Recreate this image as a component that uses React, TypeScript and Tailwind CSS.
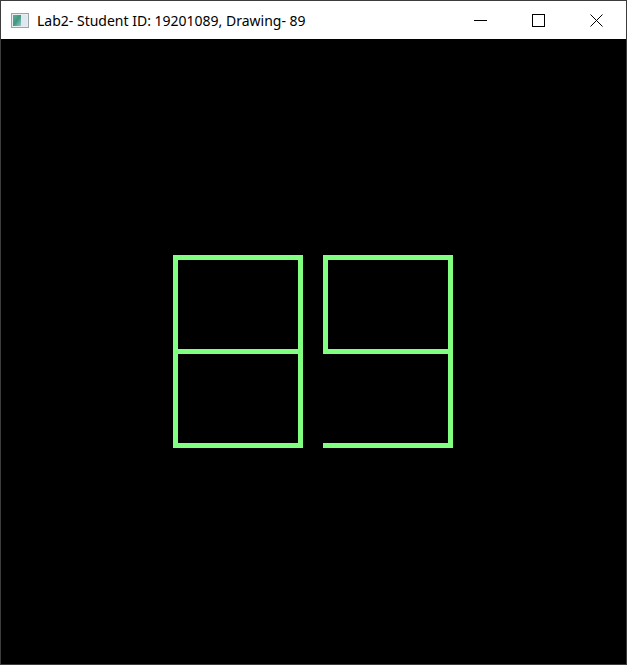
const GREEN = "#80ff80";

const AppIcon = () => (
    <svg width="18" height="15" viewBox="0 0 18 15">
        <defs>
            <linearGradient id="ic" x1="0" y1="0" x2="1" y2="1">
                <stop offset="0" stopColor="#6aa6b0" />
                <stop offset="0.5" stopColor="#3f9a7a" />
                <stop offset="1" stopColor="#9cc6d6" />
            </linearGradient>
        </defs>
        <rect x="0.5" y="0.5" width="17" height="14" fill="#e8eef2" stroke="#9aa4ac" />
        <rect x="2" y="2" width="8" height="11" fill="url(#ic)" />
        <rect x="10" y="2" width="6" height="11" fill="#dfe8ee" />
    </svg>
);

const TitleBar = () => {
    return (
        <div className="flex h-[38px] items-center bg-white">
            <div className="ml-[10px] mt-[1px] flex">
                <AppIcon />
            </div>
            <span
                className="ml-[8px] text-[14px] text-black whitespace-nowrap"
                style={{fontFamily: '"Noto Sans", "DejaVu Sans", sans-serif'}}
            >
                Lab2- Student ID: 19201089, Drawing- 89
            </span>
            <div className="ml-auto mr-[1px] flex h-full">
                {/* minimize */}
                <div className="flex w-[58px] items-center justify-center">
                    <svg width="13" height="13" viewBox="0 0 13 13">
                        <line x1="0" y1="6.5" x2="13" y2="6.5" stroke="#000" strokeWidth="1" />
                    </svg>
                </div>
                {/* maximize */}
                <div className="flex w-[58px] items-center justify-center">
                    <svg width="13" height="13" viewBox="0 0 13 13">
                        <rect x="0.5" y="0.5" width="12" height="12" fill="none" stroke="#000" strokeWidth="1" />
                    </svg>
                </div>
                {/* close */}
                <div className="flex w-[58px] items-center justify-center">
                    <svg width="13" height="13" viewBox="0 0 13 13">
                        <path d="M0.5 0.5 L12.5 12.5 M12.5 0.5 L0.5 12.5" stroke="#000" strokeWidth="1" />
                    </svg>
                </div>
            </div>
        </div>
    );
};

// the opengl canvas, page coordinates via the viewBox
const Drawing = () => (
    <svg className="block h-[625px] w-[625px]" viewBox="1 39 625 625">
        {/* 8 */}
        <rect x="173" y="255" width="130" height="5" fill={GREEN} />
        <rect x="173" y="349" width="130" height="5" fill={GREEN} />
        <rect x="173" y="443" width="130" height="5" fill={GREEN} />
        <rect x="173" y="255" width="5" height="193" fill={GREEN} />
        <rect x="298" y="255" width="5" height="193" fill={GREEN} />
        {/* 9 */}
        <rect x="323" y="255" width="130" height="5" fill={GREEN} />
        <rect x="323" y="349" width="130" height="5" fill={GREEN} />
        <rect x="323" y="443" width="130" height="5" fill={GREEN} />
        <rect x="323" y="255" width="5" height="99" fill={GREEN} />
        <rect x="448" y="255" width="5" height="193" fill={GREEN} />
    </svg>
);

export default function App() {
    return (
        <div className="h-[665px] w-[627px] overflow-hidden border border-[#3c3c3c] bg-black">
            <TitleBar />
            <Drawing />
        </div>
    );
}
